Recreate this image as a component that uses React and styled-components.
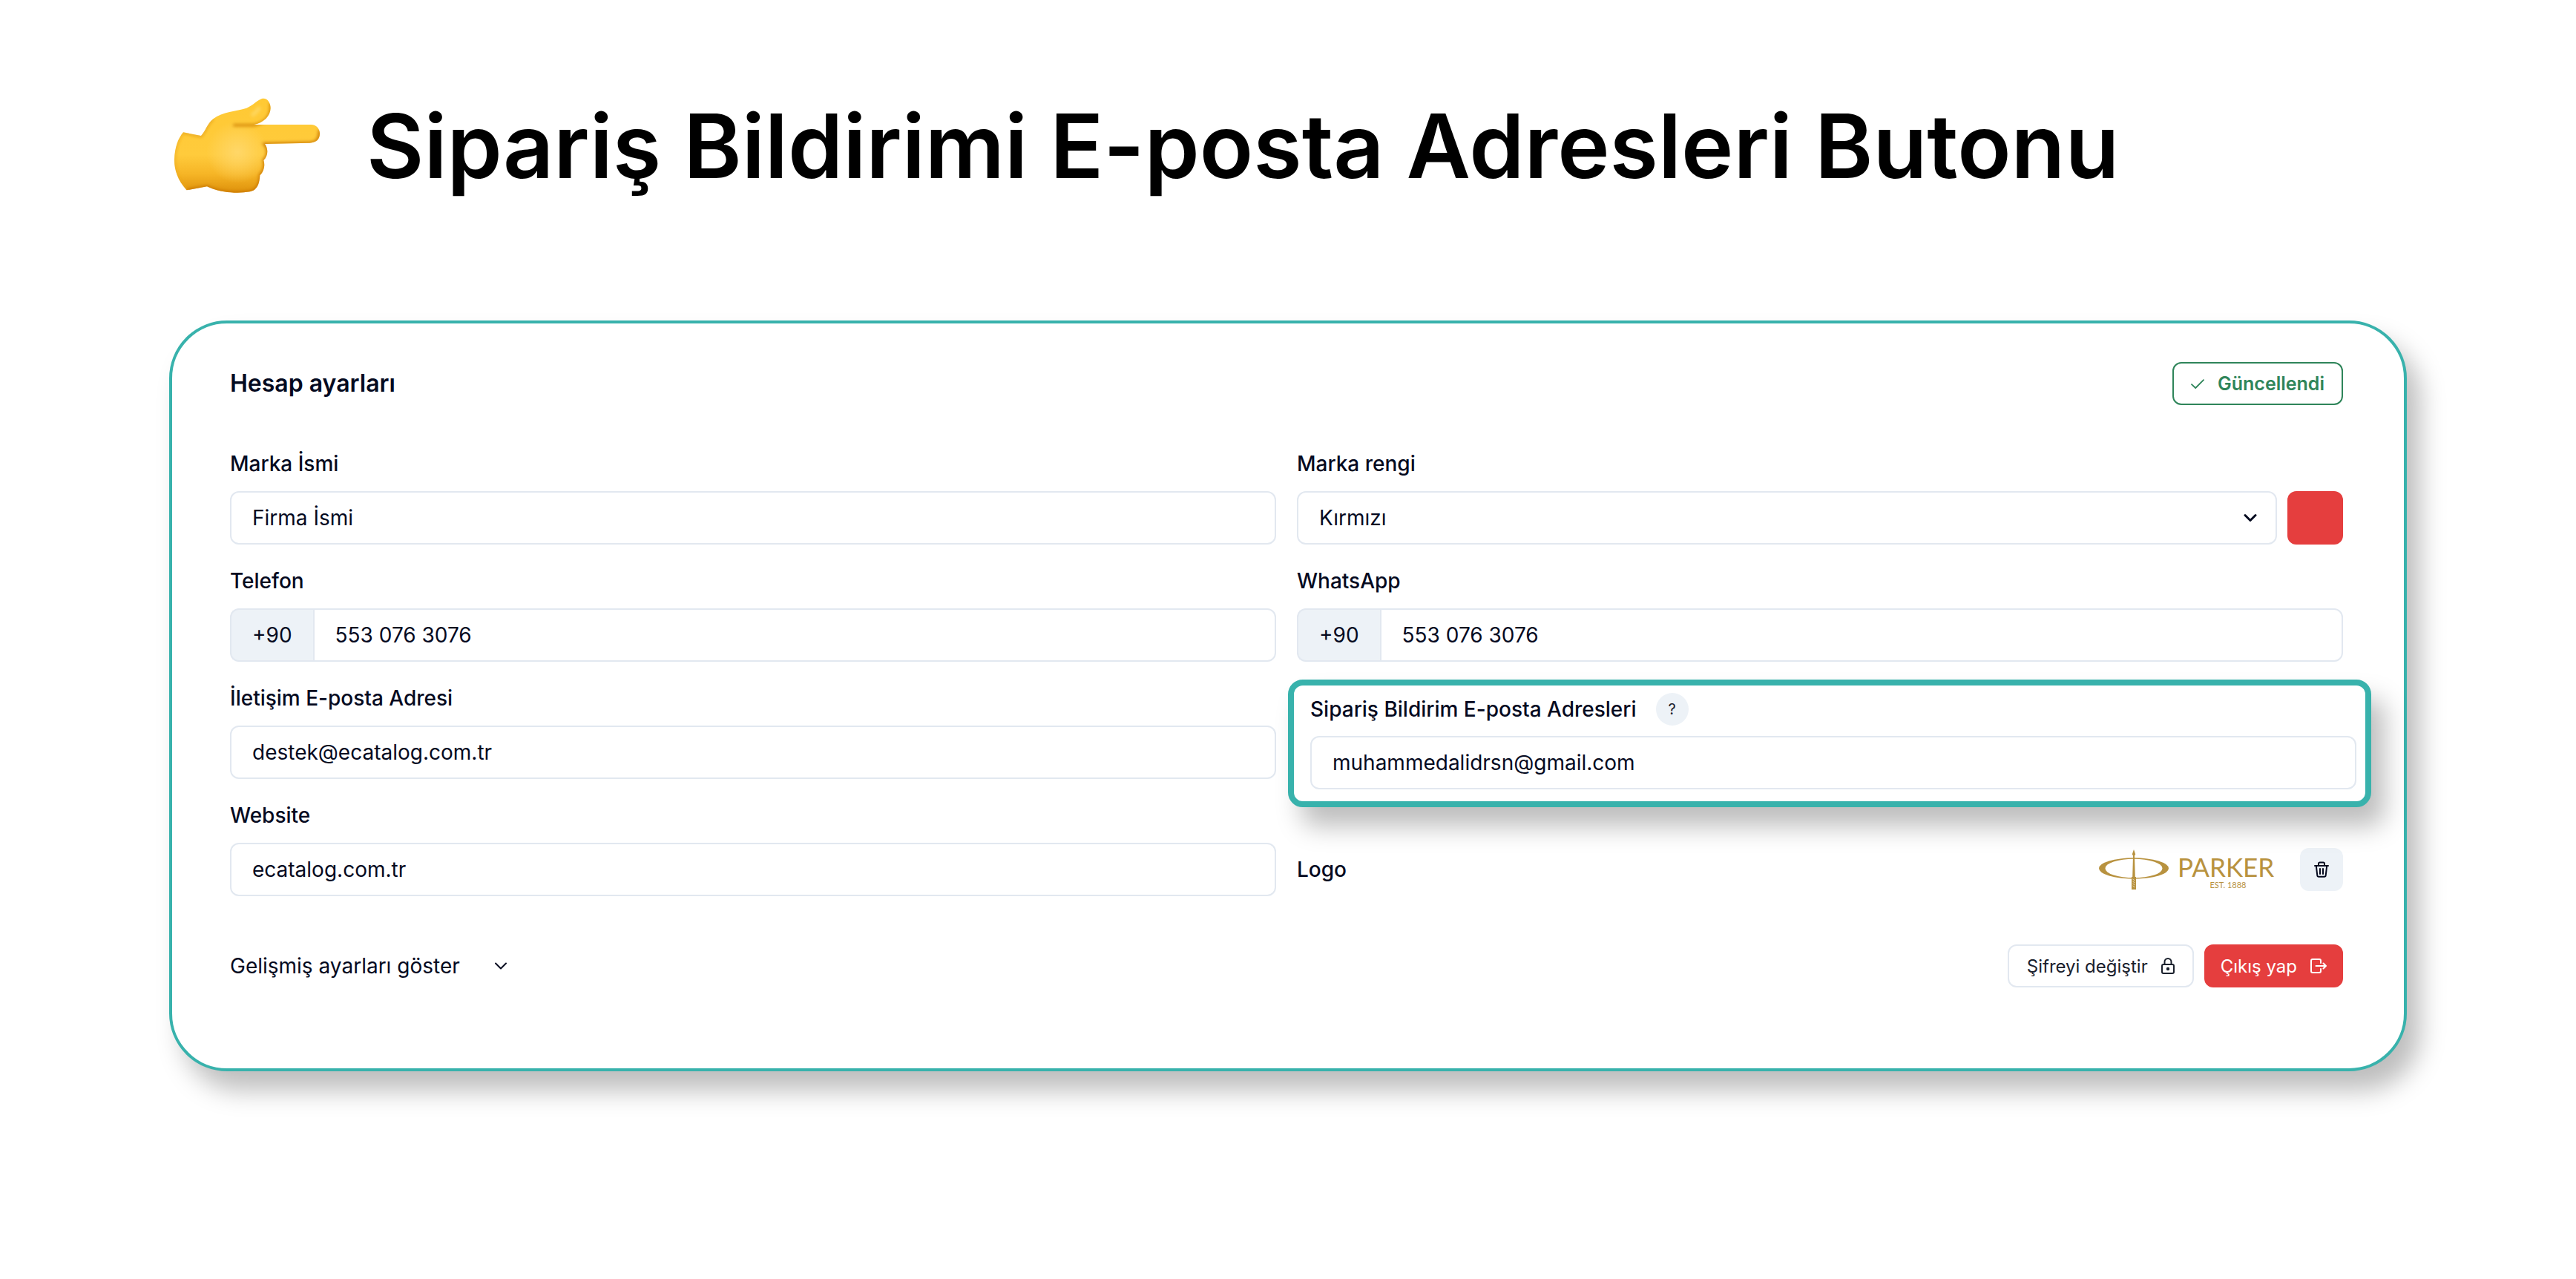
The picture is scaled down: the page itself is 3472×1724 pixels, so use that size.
import React from "react";
import styled, { createGlobalStyle } from "styled-components";

const teal = "#38b2ac";
const ink = "#050a1f";
const line = "#e2e8f0";
const mist = "#edf2f7";
const red = "#e53e3e";
const green = "#2f855a";
const gold = "#b8923f";
const lift = "18px 26px 34px rgba(0, 0, 0, 0.26)";

const GlobalStyle = createGlobalStyle`
  *, *::before, *::after { box-sizing: border-box; }
  body {
    margin: 0;
    background: #fff;
    color: ${ink};
    font-family: Inter, "Liberation Sans", sans-serif;
  }
  input, select, button { font: inherit; color: inherit; }
  svg { display: block; flex: none; }
`;

const Page = styled.main`
  padding: 131px 228px 280px;
`;

const PageHeader = styled.header`
  display: flex;
  align-items: center;
  gap: 62px;
  margin-bottom: 169px;
`;

const PageTitle = styled.h1`
  margin: 0;
  color: #000;
  font-size: 119px;
  font-weight: 600;
  line-height: 132px;
`;

const Card = styled.section`
  padding: 52px 82px 109px 78px;
  border: 4px solid ${teal};
  border-radius: 78px;
  background: #fff;
  box-shadow: ${lift};
`;

const CardHeader = styled.div`
  display: flex;
  align-items: center;
  justify-content: space-between;
  margin-bottom: 58px;
`;

const CardTitle = styled.h2`
  margin: 0;
  font-size: 32px;
  font-weight: 600;
  line-height: 44px;
`;

const Button = styled.button`
  display: flex;
  align-items: center;
  gap: 18px;
  height: 58px;
  padding: 0 ${(p) => p.$pad}px;
  border: 2px solid ${(p) => p.$border};
  border-radius: 12px;
  background: ${(p) => p.$fill || "#fff"};
  color: ${(p) => p.$color};
  font-size: ${(p) => (p.$strong ? 25 : 24)}px;
  font-weight: ${(p) => (p.$strong ? 600 : 400)};
`;

const Fields = styled.form`
  display: grid;
  grid-template-columns: 1fr 1fr;
  gap: 28px;
`;

const Field = styled.div`
  display: flex;
  flex-direction: column;
  gap: 16px;
`;

const HighlightedField = styled(Field)`
  position: relative;
  gap: 14px;
  margin: -4px -38px -38px -12px;
  padding: 10px 12px 16px 22px;
  border: 8px solid ${teal};
  border-radius: 20px;
  background: #fff;
  box-shadow: ${lift};
`;

const LabelRow = styled.div`
  display: flex;
  align-items: center;
  gap: 26px;
`;

const Label = styled.label`
  font-size: 28px;
  font-weight: 500;
  line-height: 42px;
`;

const HelpButton = styled.button`
  width: 44px;
  height: 44px;
  padding: 0;
  border: 0;
  border-radius: 50%;
  background: ${mist};
  color: #1a202c;
  font-size: 20px;
`;

const TextInput = styled.input`
  width: 100%;
  height: 72px;
  padding: 0 28px;
  border: 2px solid ${line};
  border-radius: 12px;
  background: #fff;
  font-size: 28px;
  outline: none;
`;

const PhoneGroup = styled.div`
  display: flex;
`;

const DialCode = styled.span`
  display: flex;
  align-items: center;
  padding: 0 28px;
  border: 2px solid ${line};
  border-right: 0;
  border-radius: 12px 0 0 12px;
  background: ${mist};
  font-size: 28px;
`;

const PhoneInput = styled(TextInput)`
  flex: 1;
  border-radius: 0 12px 12px 0;
`;

const ColourRow = styled.div`
  display: flex;
  gap: 14px;
`;

const SelectBox = styled.div`
  display: grid;
  flex: 1;
  align-items: center;

  > * { grid-area: 1 / 1; }
  > svg { justify-self: end; margin-right: 27px; pointer-events: none; }
`;

const Select = styled.select`
  appearance: none;
  width: 100%;
  height: 72px;
  padding: 0 28px;
  border: 2px solid ${line};
  border-radius: 12px;
  background: #fff;
  font-size: 28px;
`;

const Swatch = styled.div`
  width: 75px;
  height: 72px;
  border-radius: 12px;
  background: ${red};
`;

const LogoRow = styled.div`
  display: flex;
  align-items: center;
  align-self: end;
  gap: 29px;
  height: 72px;
`;

const LogoLabel = styled.span`
  flex: 1;
  font-size: 28px;
  font-weight: 500;
`;

const IconButton = styled.button`
  display: grid;
  place-items: center;
  width: 58px;
  height: 58px;
  padding: 0;
  border: 0;
  border-radius: 12px;
  background: ${mist};
`;

const CardFooter = styled.footer`
  display: flex;
  align-items: center;
  gap: 14px;
  margin-top: 65px;
`;

const Disclosure = styled.button`
  display: flex;
  align-items: center;
  gap: 46px;
  margin-right: auto;
  padding: 0;
  border: 0;
  background: none;
  font-size: 28px;
`;

const HAND =
  "M66 190 L138 204 C158 184 160 158 187 136 C225 106 280 106 322 92 C350 80 365 60 384 54 C405 49 419 70 419 92 C418 125 392 150 352 159 L582 159 C606 159 618 177 618 196 C618 219 603 232 577 233 L396 237 C411 258 409 287 391 303 C398 325 391 350 376 364 C374 402 364 423 336 430 C280 440 208 432 162 409 L80 424 C43 384 29 340 30 300 C32 250 45 215 66 190 Z";

function PointingHand() {
  return (
    <svg width="204" height="132" viewBox="9 48 612 396" role="img" aria-label="Sağı gösteren el">
      <defs>
        <linearGradient id="skin" x1="0" y1="48" x2="0" y2="436" gradientUnits="userSpaceOnUse">
          <stop offset="0" stopColor="#ffc933" />
          <stop offset="0.6" stopColor="#ffcb3c" />
          <stop offset="0.8" stopColor="#f6b526" />
          <stop offset="1" stopColor="#dd900a" />
        </linearGradient>
        <radialGradient id="palm" cx="285" cy="270" r="125" gradientUnits="userSpaceOnUse">
          <stop offset="0" stopColor="#ffd768" />
          <stop offset="1" stopColor="#ffd768" stopOpacity="0" />
        </radialGradient>
        <filter id="soft" x="-10%" y="-10%" width="120%" height="120%">
          <feGaussianBlur stdDeviation="6" />
        </filter>
        <clipPath id="outline"><path d={HAND} /></clipPath>
      </defs>
      <path d={HAND} fill="url(#skin)" />
      <g clipPath="url(#outline)">
        <path d={HAND} fill="url(#palm)" />
        <g filter="url(#soft)" fill="none">
          <path d="M419 70 C426 125 395 155 350 161 L268 161" stroke="#cf7f08" strokeWidth="9" />
          <path d="M618 180 C620 220 603 234 577 235 L396 238 C413 258 411 287 393 303 C400 325 393 350 378 364 C376 402 366 425 336 432 C280 442 208 434 162 411 L80 426" stroke="#c87404" strokeWidth="12" />
          <path d="M64 190 L138 206 C158 184 160 158 187 136" stroke="#de9714" strokeWidth="7" />
          <path d="M80 424 C43 384 29 340 30 300 C32 250 45 215 66 190" stroke="#eba61c" strokeWidth="7" />
          <path d="M374 88 Q366 108 342 122" stroke="#ffd75e" strokeWidth="16" />
        </g>
      </g>
    </svg>
  );
}

function Stroke({ w, h, weight = 2, children }) {
  return (
    <svg
      width={w}
      height={h}
      viewBox={`0 0 ${w} ${h}`}
      fill="none"
      stroke="currentColor"
      strokeWidth={weight}
      strokeLinecap="round"
      strokeLinejoin="round"
      aria-hidden="true"
    >
      {children}
    </svg>
  );
}

const CheckIcon = () => (
  <Stroke w={18} h={13} weight={1.8}><path d="M1 7.2 6.2 12 17 1.2" /></Stroke>
);
const ChevronIcon = ({ weight }) => (
  <Stroke w={18} h={12} weight={weight}><path d="m2 2.5 7 7 7-7" /></Stroke>
);
const TrashIcon = () => (
  <Stroke w={20} h={22}>
    <path d="M1 6h18M6 6V3.2A1.7 1.7 0 0 1 7.7 1.5h4.6A1.7 1.7 0 0 1 14 3.2V6M2.8 6l1.5 13a2 2 0 0 0 2 1.8h7.4a2 2 0 0 0 2-1.8l1.5-13M8 10v7M12 10v7" />
  </Stroke>
);
const LockIcon = () => (
  <Stroke w={18} h={22}>
    <rect x="1" y="9" width="16" height="12" rx="2" />
    <path d="M4.5 9V5.5a4.5 4.5 0 0 1 9 0V9" />
    <circle cx="9" cy="15" r="1.2" fill="currentColor" />
  </Stroke>
);
const ExitIcon = () => (
  <Stroke w={22} h={20}>
    <path d="M14 6V3a2 2 0 0 0-2-2H3a2 2 0 0 0-2 2v14a2 2 0 0 0 2 2h9a2 2 0 0 0 2-2v-3M7.5 10H21M17.5 6.5 21 10l-3.5 3.5" />
  </Stroke>
);

const Mark = styled.svg`
  fill: ${gold};
  font-family: Lato, "Liberation Sans", sans-serif;
`;

function ParkerLogo() {
  return (
    <Mark width="242" height="54" viewBox="0 0 242 54" role="img" aria-label="Parker">
      <path
        fillRule="evenodd"
        d="M0 25.5a47 14.2 0 1 1 94 0a47 14.2 0 1 1-94 0ZM8.5 25.5a38.5 12.8 0 1 0 77 0a38.5 12.8 0 1 0-77 0Z"
      />
      <path d="M47 0 49.2 6.5 48 8.5 48.8 37H50V54H44V37H45.2L46 8.5 44.8 6.5Z" />
      <path d="m45.5 40 3 2m-3 1 3 2m-3 1 3 2m-3 1 3 2" stroke="#fff" strokeWidth="0.6" />
      <text x="106" y="37" fontSize="35">PARKER</text>
      <text x="174" y="52" fontSize="11" textAnchor="middle">EST. 1888</text>
    </Mark>
  );
}

function TextField({ id, label, value, type = "text" }) {
  return (
    <Field>
      <Label htmlFor={id}>{label}</Label>
      <TextInput id={id} type={type} defaultValue={value} />
    </Field>
  );
}

function PhoneField({ id, label, value }) {
  return (
    <Field>
      <Label htmlFor={id}>{label}</Label>
      <PhoneGroup>
        <DialCode>+90</DialCode>
        <PhoneInput id={id} type="tel" defaultValue={value} />
      </PhoneGroup>
    </Field>
  );
}

export default function App() {
  return (
    <Page>
      <GlobalStyle />
      <PageHeader>
        <PointingHand />
        <PageTitle>Sipariş Bildirimi E-posta Adresleri Butonu</PageTitle>
      </PageHeader>

      <Card>
        <CardHeader>
          <CardTitle>Hesap ayarları</CardTitle>
          <Button type="button" $pad={23} $border={green} $color={green} $strong>
            <CheckIcon />
            Güncellendi
          </Button>
        </CardHeader>

        <Fields>
          <TextField id="brand" label="Marka İsmi" value="Firma İsmi" />
          <Field>
            <Label htmlFor="colour">Marka rengi</Label>
            <ColourRow>
              <SelectBox>
                <Select id="colour" defaultValue="red">
                  <option value="red">Kırmızı</option>
                </Select>
                <ChevronIcon weight={3} />
              </SelectBox>
              <Swatch />
            </ColourRow>
          </Field>

          <PhoneField id="phone" label="Telefon" value="553 076 3076" />
          <PhoneField id="whatsapp" label="WhatsApp" value="553 076 3076" />

          <TextField id="email" type="email" label="İletişim E-posta Adresi" value="destek@ecatalog.com.tr" />
          <HighlightedField>
            <LabelRow>
              <Label htmlFor="orders">Sipariş Bildirim E-posta Adresleri</Label>
              <HelpButton type="button">?</HelpButton>
            </LabelRow>
            <TextInput id="orders" type="email" defaultValue="muhammedalidrsn@gmail.com" />
          </HighlightedField>

          <TextField id="website" label="Website" value="ecatalog.com.tr" />
          <LogoRow>
            <LogoLabel>Logo</LogoLabel>
            <ParkerLogo />
            <IconButton type="button" aria-label="Logoyu sil">
              <TrashIcon />
            </IconButton>
          </LogoRow>
        </Fields>

        <CardFooter>
          <Disclosure type="button" aria-expanded="false">
            Gelişmiş ayarları göster
            <ChevronIcon weight={2} />
          </Disclosure>
          <Button type="button" $pad={24} $border={line} $color="#1a202c">
            Şifreyi değiştir
            <LockIcon />
          </Button>
          <Button type="button" $pad={20} $border={red} $fill={red} $color="#fff">
            Çıkış yap
            <ExitIcon />
          </Button>
        </CardFooter>
      </Card>
    </Page>
  );
}
